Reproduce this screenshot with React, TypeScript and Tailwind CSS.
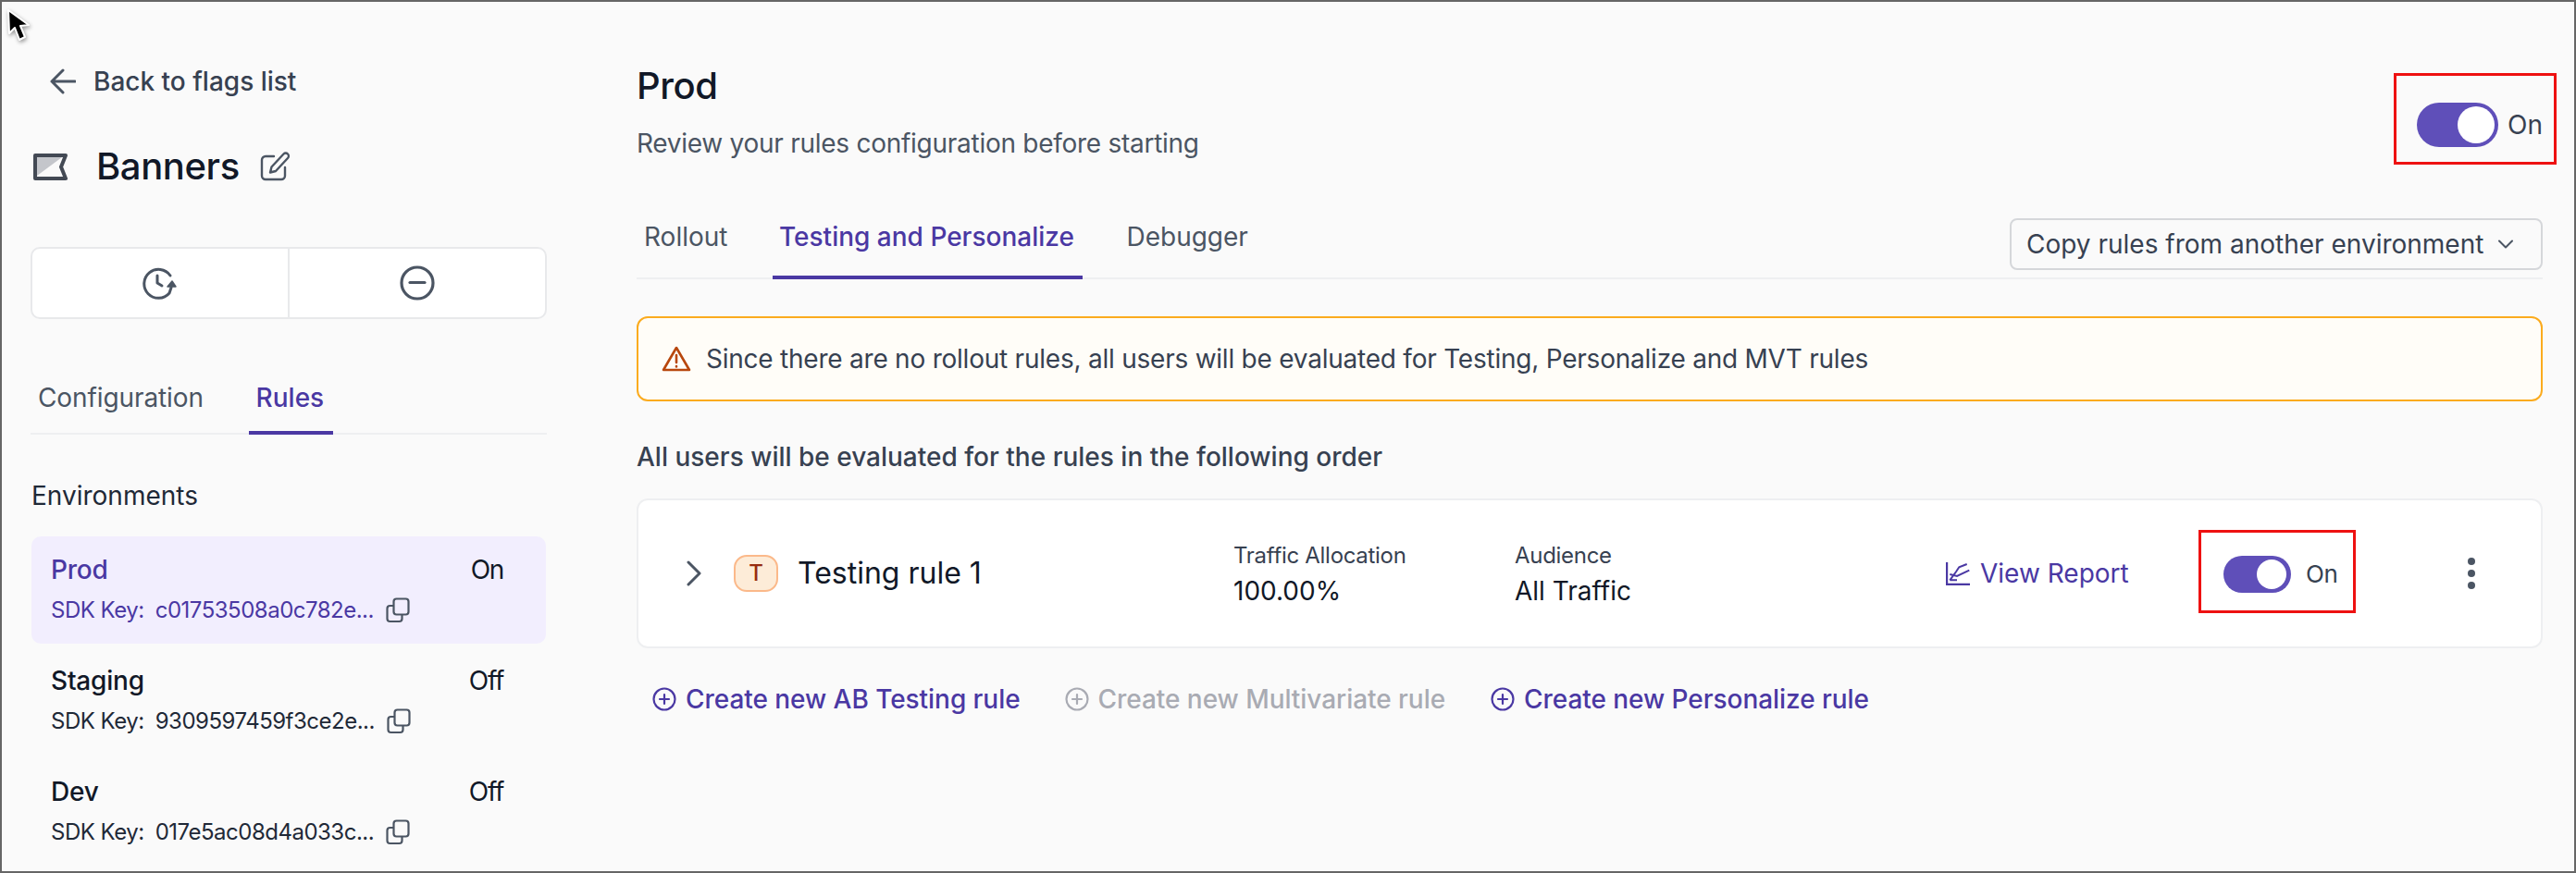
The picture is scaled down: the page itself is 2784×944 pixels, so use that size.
import React from "react";

const P = "#4a38a3";

function Copy() {
  return (
    <svg width="26" height="28" viewBox="0 0 26 28" fill="none" stroke="#4b5563" strokeWidth="2.2" strokeLinejoin="round">
      <rect x="8.5" y="1.5" width="16" height="17" rx="3" />
      <path d="M8.5 9H4.5a3 3 0 0 0-3 3v11a3 3 0 0 0 3 3h10a3 3 0 0 0 3-3v-4.500" />
    </svg>
  );
}

function PlusCircle({ c, size = 26 }: { c: string; size?: number }) {
  return (
    <svg width={size} height={size} viewBox="0 0 26 26" fill="none" stroke={c} strokeWidth="2.200" strokeLinecap="round" className="shrink-0">
      <circle cx="13" cy="13" r="11.500" />
      <path d="M13 8v10M8 13h10" />
    </svg>
  );
}

function Toggle({ big }: { big?: boolean }) {
  return big ? (
    <div className="flex h-[48px] w-[88px] shrink-0 items-center justify-end rounded-full bg-[#5f4fb9] pr-[4px]">
      <div className="h-[40px] w-[40px] rounded-full bg-white" />
    </div>
  ) : (
    <div className="flex h-[40px] w-[73px] shrink-0 items-center justify-end rounded-full bg-[#5f4fb9] pr-[5px]">
      <div className="h-[32px] w-[32px] rounded-full bg-white" />
    </div>
  );
}

function Env({ name, state, sdk, active }: { name: string; state: string; sdk: string; active?: boolean }) {
  return (
    <div className={`ml-[1px] flex h-[116px] w-[556px] flex-col rounded-[10px] pl-[21px] pt-[18px] ${active ? "bg-[#f2eefe]" : ""}`}>
      <div className="flex h-[36px] items-center justify-between pr-[46px]">
        <span className={`text-[28px] font-medium tracking-[-0.2px] ${active ? "text-[#4a38a3]" : "text-[#111827]"}`}>{name}</span>
        <span className="text-[28px] tracking-[-1.3px] text-[#111827]">{state}</span>
      </div>
      <div className={`mt-[9px] flex h-[34px] items-center text-[24px] tracking-[-0.5px] ${active ? "text-[#4a38a3]" : "text-[#1f2937]"}`}>
        <span>SDK Key:</span>
        <span className="ml-[12px]">{sdk}...</span>
        <span className="ml-[13px] flex"><Copy /></span>
      </div>
    </div>
  );
}

export default function App() {
  return (
    <div className="relative box-border flex h-[944px] w-[2784px] overflow-hidden border-2 border-[#666666] bg-[#fafafa] text-[28px] leading-[40px] tracking-[0px] text-[#374151] [font-family:Inter,sans-serif]">
      {/* cursor */}
      <svg className="absolute left-[3px] top-[6px] drop-shadow-[1px_2px_2px_rgba(0,0,0,0.4)]" width="30" height="42" viewBox="0 0 30 42">
        <path d="M4 3l1 25 6-6 5 13 6-3-5-12 9-1z" fill="#000" stroke="#fff" strokeWidth="2" strokeLinejoin="round" />
      </svg>

      {/* sidebar */}
      <aside className="ml-[31px] w-[558px] shrink-0 pt-[66px]">
        <div className="flex h-[40px] items-center pl-[21px] font-medium text-[#374151]">
          <svg width="28" height="28" viewBox="0 0 28 28" fill="none" stroke="#4b5563" strokeWidth="3" strokeLinecap="round" strokeLinejoin="round">
            <path d="M27 14H2M14 2 2 14l12 12" />
          </svg>
          <span className="ml-[19px]">Back to flags list</span>
        </div>
        <div className="mt-[52px] flex h-[40px] items-center pl-[3px]">
          <svg width="37" height="29" viewBox="0 0 37 29">
            <path d="M4 4H31L4 24Z" fill="#c4c6cb" />
            <path d="M2 2H35L30 14.500 35 27H2Z" fill="none" stroke="#434954" strokeWidth="4" strokeLinejoin="round" />
          </svg>
          <span className="ml-[31px] text-[40px] font-medium tracking-[-0.4px] text-[#111827]">Banners</span>
          <svg className="ml-[22px]" width="32" height="32" viewBox="0 0 32 32" fill="none" stroke="#4b5563" strokeWidth="2.400" strokeLinecap="round" strokeLinejoin="round">
            <path d="M15 5H6a4 4 0 0 0-4 4v17a4 4 0 0 0 4 4h17a4 4 0 0 0 4-4v-9" />
            <path d="M25.500 2.500a3 3 0 0 1 4.500 4.500L17 21l-6 1.500 1.500-6z" />
          </svg>
        </div>
        <div className="mt-[67px] flex h-[78px] rounded-[10px] border-2 border-[#e8e9eb] bg-white">
          <div className="flex flex-1 items-center justify-center border-r-2 border-[#e8e9eb]">
            <svg width="40" height="36" viewBox="0 0 40 36" fill="none" stroke="#4b5563" strokeWidth="3" strokeLinecap="round" strokeLinejoin="round">
              <path d="M31 10A15.500 15.500 0 1 0 30 29L32 23" />
              <path d="M17 10v8l5 3" />
              <path d="M28 22l5-6 4 6z" fill="#4b5563" strokeWidth="1.500" />
            </svg>
          </div>
          <div className="flex flex-1 items-center justify-center">
            <svg width="38" height="38" viewBox="0 0 38 38" fill="none" stroke="#4b5563" strokeWidth="3.200" strokeLinecap="round">
              <circle cx="19" cy="19" r="17" />
              <path d="M11 18.500h16" />
            </svg>
          </div>
        </div>
        <div className="mt-[55px] flex h-[70px] border-b-2 border-[#eeeff1]">
          <div className="px-[8px] pt-[10px] tracking-[-0.1px] text-[#4b5563]">Configuration</div>
          <div className="-mb-[2px] ml-[41px] box-border h-[70px] w-[91px] border-b-4 border-[#4a38a3] pt-[10px] pr-[2px] text-center font-medium text-[#4a38a3]">Rules</div>
        </div>
        <div className="mt-[46px] pl-[1px] text-[#1f2937]">Environments</div>
        <div className="mt-[24px] flex flex-col gap-[4px]">
          <Env name="Prod" state="On" sdk="c01753508a0c782e" active />
          <Env name="Staging" state="Off" sdk="9309597459f3ce2e" />
          <Env name="Dev" state="Off" sdk="017e5ac08d4a033c" />
        </div>
      </aside>

      {/* main */}
      <main className="ml-[97px] w-[2060px] shrink-0 pt-[68px]">
        <div className="flex h-[166px] items-start justify-between">
          <div>
            <div className="text-[40px] font-medium leading-[46px] tracking-[-0.4px] text-[#111827]">Prod</div>
            <div className="mt-[19px] tracking-[-0.27px] text-[#4b5563]">Review your rules configuration before starting</div>
          </div>
          <div className="-mr-[15px] mt-[9px] box-border flex h-[99px] w-[176px] items-start border-[3px] border-[#ee1111] pl-[22px] pt-[29px]">
            <Toggle big />
            <span className="ml-[10px] leading-[48px]">On</span>
          </div>
        </div>

        <div className="flex h-[66px] items-start justify-between border-b-2 border-[#eeeff1]">
          <div className="flex">
            <div className="px-[8px] text-[#4b5563]">Rollout</div>
            <div className="ml-[41px] box-border h-[66px] w-[335px] border-b-4 border-[#4a38a3] pr-[3px] text-center font-medium text-[#4a38a3]">Testing and Personalize</div>
            <div className="ml-[37px] px-[10px] text-[#4b5563]">Debugger</div>
          </div>
          <div className="box-border flex h-[56px] w-[576px] items-center rounded-[8px] border-2 border-[#d5d7da] pl-[16px] text-[#374151]">
            <span>Copy rules from another environment</span>
            <svg className="ml-[16px]" width="16" height="10" viewBox="0 0 16 10" fill="none" stroke="#4b5563" strokeWidth="2" strokeLinecap="round" strokeLinejoin="round">
              <path d="M1 1.500 8 8.500l7-7" />
            </svg>
          </div>
        </div>

        <div className="mt-[40px] box-border flex h-[92px] items-center rounded-[12px] border-2 border-[#fbab1e] bg-[#fffdf8] pl-[25px]">
          <svg width="32" height="28" viewBox="0 0 32 28" fill="none" stroke="#b8470d" strokeWidth="2.600" strokeLinecap="round" strokeLinejoin="round">
            <path d="M16 2 2 26h28z" />
            <path d="M16 10v8M16 22v.500" />
          </svg>
          <span className="ml-[16px] tracking-[-0.23px]">Since there are no rollout rules, all users will be evaluated for Testing, Personalize and MVT rules</span>
        </div>

        <div className="mt-[40px] font-medium text-[#374151]">All users will be evaluated for the rules in the following order</div>

        <div className="mt-[25px] box-border flex h-[162px] items-center rounded-[12px] border-2 border-[#eeeff1] bg-white pl-[48px]">
          <svg width="24" height="28" viewBox="0 0 24 28" fill="none" stroke="#4b5563" strokeWidth="3" strokeLinecap="round" strokeLinejoin="round" className="shrink-0">
            <path d="M6 2l12 12L6 26" />
          </svg>
          <div className="ml-[31px] box-border flex h-[40px] w-[48px] shrink-0 items-center justify-center rounded-[14px] border-2 border-[#fbb98a] bg-[#fdecd8] text-[24px] font-medium text-[#982c10]">T</div>
          <div className="ml-[21px] w-[471px] shrink-0 text-[32px] tracking-[0px] text-[#111827]">Testing rule 1</div>
          <div className="w-[304px] shrink-0">
            <div className="text-[24px] leading-[34px] tracking-[-0.3px] text-[#374151]">Traffic Allocation</div>
            <div className="mt-[4px] leading-[34px] text-[#111827]">100.00%</div>
          </div>
          <div className="w-[466px] shrink-0">
            <div className="text-[24px] leading-[34px] tracking-[-0.3px] text-[#374151]">Audience</div>
            <div className="mt-[4px] leading-[34px] text-[#111827]">All Traffic</div>
          </div>
          <div className="flex w-[273px] shrink-0 items-center text-[#4a38a3]">
            <svg width="26" height="26" viewBox="0 0 26 26" fill="none" stroke="#4a38a3" strokeWidth="2">
              <path d="M1 1v24h25" strokeWidth="2.400" />
              <path d="M4.300 20.300H12M4.300 20.300 11 11.300l3.300-5L22.700 3" />
              <path d="M4.300 14 12 16l13.300-6.300" />
            </svg>
            <span className="ml-[11px]">View Report</span>
          </div>
          <div className="-mt-[5px] box-border flex h-[90px] w-[170px] shrink-0 items-start border-[3px] border-[#ee1111] pl-[24px] pt-[25px]">
            <Toggle />
            <span className="ml-[16px] text-[26px] leading-[40px] tracking-[-0.5px]">On</span>
          </div>
          <div className="ml-[113px] flex h-[34px] w-[24px] flex-col items-center justify-between">
            <div className="h-[8px] w-[8px] rounded-full bg-[#4b5563]" />
            <div className="h-[8px] w-[8px] rounded-full bg-[#4b5563]" />
            <div className="h-[8px] w-[8px] rounded-full bg-[#4b5563]" />
          </div>
        </div>

        <div className="mt-[35px] flex items-center pl-[17px] font-medium tracking-[-0.05px]">
          <PlusCircle c={P} />
          <span className="ml-[10px] text-[#4a38a3]">Create new AB Testing rule</span>
          <span className="ml-[48px] flex"><PlusCircle c="#a9abb3" /></span>
          <span className="ml-[10px] text-[#a9abb3]">Create new Multivariate rule</span>
          <span className="ml-[49px] flex"><PlusCircle c={P} /></span>
          <span className="ml-[10px] text-[#4a38a3]">Create new Personalize rule</span>
        </div>
      </main>
    </div>
  );
}
